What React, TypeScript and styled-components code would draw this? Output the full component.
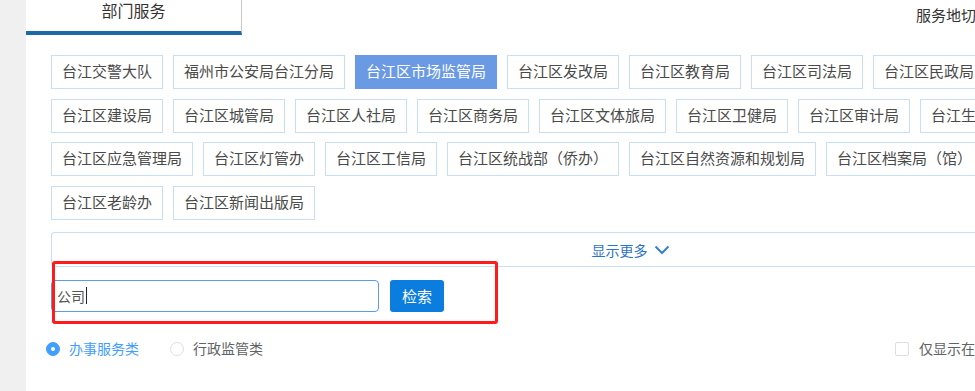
import styled, { createGlobalStyle } from 'styled-components'

const GlobalStyle = createGlobalStyle`
  html, body {
    margin: 0;
    padding: 0;
    background: #fff;
    overflow: hidden;
  }
  body {
    font-family: "Liberation Sans", "Noto Sans CJK SC", sans-serif;
  }
`

const tags = [
  '台江交警大队', '福州市公安局台江分局', '台江区市场监管局', '台江区发改局', '台江区教育局',
  '台江区司法局', '台江区民政局', '台江区建设局', '台江区城管局', '台江区人社局',
  '台江区商务局', '台江区文体旅局', '台江区卫健局', '台江区审计局', '台江生态环境局',
  '台江区应急管理局', '台江区灯管办', '台江区工信局', '台江区统战部（侨办）',
  '台江区自然资源和规划局', '台江区档案局（馆）', '台江区老龄办', '台江区新闻出版局',
]

const ACTIVE = '台江区市场监管局'

const App = () => {
  return (
    <Page>
      <GlobalStyle />
      <Sidebar />
      <Main>
        <Header>
          <Tab>部门服务</Tab>
          <HeaderLink>服务地切换</HeaderLink>
        </Header>
        <Body>
          <TagList>
            {tags.map((t) => (
              <Tag key={t} $active={t === ACTIVE}>{t}</Tag>
            ))}
          </TagList>
          <MoreBar>
            显示更多
            <svg width="16" height="10" viewBox="0 0 16 10">
              <path d="M1.5 1.5 L8 8 L14.5 1.5" fill="none" stroke="#3a7fd0" strokeWidth="2" />
            </svg>
          </MoreBar>
          <SearchRow>
            <SearchField>
              公司<Caret />
            </SearchField>
            <SearchButton>检索</SearchButton>
            <Highlight />
          </SearchRow>
          <FilterRow>
            <RadioItem>
              <Radio $checked />
              <RadioLabel $checked>办事服务类</RadioLabel>
            </RadioItem>
            <RadioItem>
              <Radio />
              <RadioLabel>行政监管类</RadioLabel>
            </RadioItem>
            <CheckItem>
              <CheckBox />
              <RadioLabel>仅显示在线办理事项</RadioLabel>
            </CheckItem>
          </FilterRow>
        </Body>
      </Main>
    </Page>
  )
}

export default App

const Page = styled.div`
  display: flex;
  height: 391px;
  width: 1300px;
`

const Sidebar = styled.div`
  width: 26px;
  flex-shrink: 0;
  background: #f0f0f0;
`

const Main = styled.div`
  flex: 1;
  display: flex;
  flex-direction: column;
  background: #fff;
`

const Header = styled.div`
  display: flex;
  height: 35px;
`

const Tab = styled.div`
  width: 215px;
  height: 31px;
  box-sizing: content-box;
  border-right: 1px solid #c8c8c8;
  border-bottom: 4px solid #1b6aa4;
  padding-top: 0;
  text-align: center;
  font-size: 16px;
  line-height: 24px;
  color: #333;
`

const HeaderLink = styled.div`
  margin-left: 674px;
  padding-top: 5px;
  font-size: 15px;
  line-height: 22px;
  color: #333;
  white-space: nowrap;
`

const Body = styled.div`
  padding-left: 25px;
`

const TagList = styled.div`
  display: flex;
  flex-wrap: wrap;
  width: 1030px;
  margin-top: 20px;
  gap: 9.67px 10px;
`

const Tag = styled.div<{ $active?: boolean }>`
  height: 34px;
  box-sizing: border-box;
  padding: 0 10px;
  border: 1px solid ${(p) => (p.$active ? '#6a9ae3' : '#c8def2')};
  background: ${(p) => (p.$active ? '#6a9ae3' : '#fff')};
  color: ${(p) => (p.$active ? '#fff' : '#4a4a4a')};
  font-size: 15px;
  line-height: 32px;
  white-space: nowrap;
  cursor: pointer;
`

const MoreBar = styled.div`
  display: flex;
  align-items: center;
  justify-content: center;
  gap: 6px;
  width: 1158px;
  height: 35px;
  box-sizing: border-box;
  margin-top: 12px;
  border: 1px solid #c9e0f3;
  border-right: none;
  border-top-left-radius: 4px;
  border-bottom-left-radius: 4px;
  color: #2b73c5;
  font-size: 14px;
  padding-top: 2px;
  cursor: pointer;
`

const SearchRow = styled.div`
  position: relative;
  display: flex;
  gap: 11px;
  margin-top: 13px;
`

const SearchField = styled.div`
  display: flex;
  align-items: center;
  width: 328px;
  height: 32px;
  box-sizing: border-box;
  padding-left: 5px;
  border: 1px solid #5a9de6;
  border-radius: 4px;
  font-size: 14px;
  color: #555;
`

const Caret = styled.span`
  display: inline-block;
  width: 1px;
  height: 17px;
  margin-left: 1px;
  background: #222;
`

const SearchButton = styled.button`
  width: 54px;
  height: 32px;
  border: none;
  border-radius: 3px;
  background: #0b7ddf;
  color: #fff;
  font-family: inherit;
  font-size: 15px;
  padding: 0;
  cursor: pointer;
`

const Highlight = styled.div`
  position: absolute;
  left: 1px;
  top: -19px;
  width: 446px;
  height: 63px;
  box-sizing: border-box;
  border: 3px solid #ff1b1b;
  border-radius: 3px;
  pointer-events: none;
`

const FilterRow = styled.div`
  display: flex;
  align-items: center;
  margin-top: 30px;
  margin-left: -5px;
  height: 14px;
`

const RadioItem = styled.label`
  display: flex;
  align-items: center;
  gap: 9px;
  margin-right: 31px;
  cursor: pointer;
`

const Radio = styled.span<{ $checked?: boolean }>`
  width: 14px;
  height: 14px;
  box-sizing: border-box;
  border-radius: 50%;
  border: 1px solid ${(p) => (p.$checked ? '#409eff' : '#dcdfe6')};
  background: ${(p) => (p.$checked ? '#409eff' : '#fff')};
  display: flex;
  align-items: center;
  justify-content: center;

  &::after {
    content: '';
    width: 4px;
    height: 4px;
    border-radius: 50%;
    background: #fff;
    display: ${(p) => (p.$checked ? 'block' : 'none')};
  }
`

const RadioLabel = styled.span<{ $checked?: boolean }>`
  font-size: 14px;
  line-height: 20px;
  color: ${(p) => (p.$checked ? '#409eff' : '#606266')};
  white-space: nowrap;
`

const CheckItem = styled.label`
  display: flex;
  align-items: center;
  gap: 10px;
  margin-left: 601px;
`

const CheckBox = styled.span`
  width: 14px;
  height: 14px;
  box-sizing: border-box;
  border: 1px solid #dcdfe6;
  border-radius: 2px;
  background: #fff;
`
